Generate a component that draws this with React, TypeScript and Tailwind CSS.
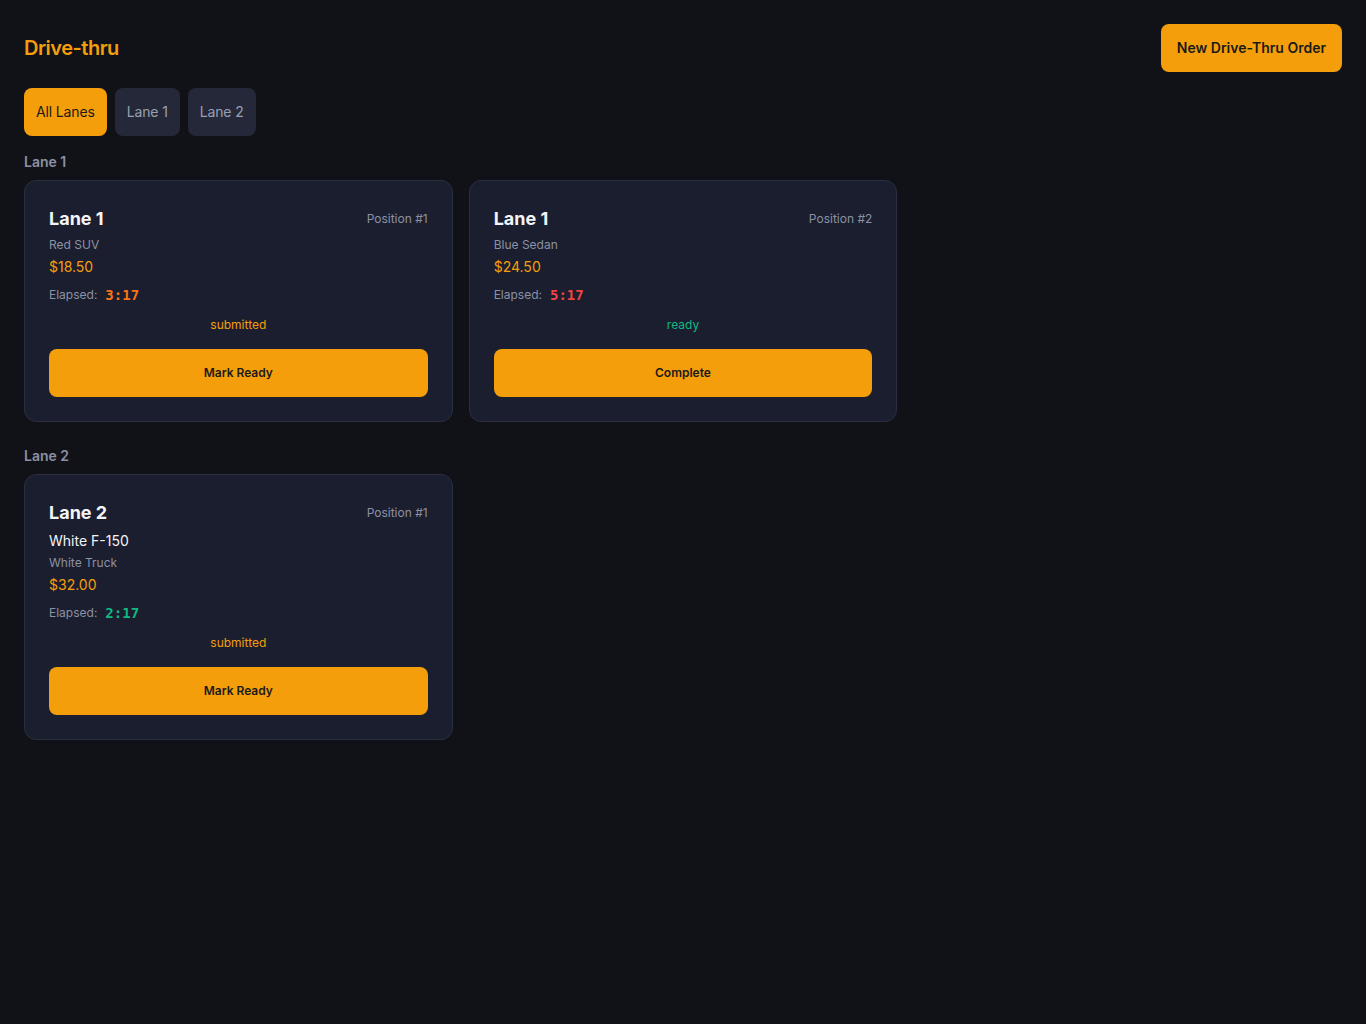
import { useState } from "react";

type Order = {
  id: number;
  lane: number;
  position: number;
  vehicle?: string;
  description: string;
  total: string;
  elapsed: string;
  elapsedColor: string;
  status: "submitted" | "ready";
};

const orders: Order[] = [
  { id: 1, lane: 1, position: 1, description: "Red SUV", total: "$18.50", elapsed: "3:17", elapsedColor: "text-[#f97316]", status: "submitted" },
  { id: 2, lane: 1, position: 2, description: "Blue Sedan", total: "$24.50", elapsed: "5:17", elapsedColor: "text-[#ef4444]", status: "ready" },
  { id: 3, lane: 2, position: 1, vehicle: "White F-150", description: "White Truck", total: "$32.00", elapsed: "2:17", elapsedColor: "text-[#10b981]", status: "submitted" },
];

const OrderCard = ({ order }: { order: Order }) => {
  return (
    <div className="rounded-xl border border-[#2a2e42] bg-[#1b1e2e] p-6">
      <div className="flex items-start justify-between">
        <h3 className="text-lg leading-7 font-bold text-gray-100">Lane {order.lane}</h3>
        <span className="text-xs leading-7 text-[#8b91a5]">Position #{order.position}</span>
      </div>
      {order.vehicle && <div className="mt-1 text-sm leading-5 text-gray-100">{order.vehicle}</div>}
      <div className="mt-1 text-xs leading-4 text-[#8b91a5]">{order.description}</div>
      <div className="mt-1 text-sm leading-5 text-[#f59e0b]">{order.total}</div>
      <div className="mt-2 flex items-center gap-2 leading-5">
        <span className="text-xs text-[#8b91a5]">Elapsed:</span>
        <span className={`font-['DejaVu_Sans_Mono',monospace] text-sm font-bold ${order.elapsedColor}`}>{order.elapsed}</span>
      </div>
      <div className={`mt-3 text-center text-xs leading-4 ${order.status === "ready" ? "text-[#10b981]" : "text-[#f59e0b]"}`}>
        {order.status}
      </div>
      <button className="mt-4 h-12 w-full rounded-lg bg-[#f59e0b] text-xs font-semibold text-[#1a1a1a]">
        {order.status === "ready" ? "Complete" : "Mark Ready"}
      </button>
    </div>
  );
};

const App = () => {
  const [filter, setFilter] = useState<number | null>(null);
  const lanes = [1, 2].filter((l) => filter === null || filter === l);

  return (
    <div className="min-h-screen bg-[#111218] p-6 font-['Inter',sans-serif]">
      <header className="flex items-center justify-between">
        <h1 className="text-xl font-semibold tracking-tight text-[#f59e0b]">Drive-thru</h1>
        <button className="h-12 rounded-lg bg-[#f59e0b] px-4 text-sm font-semibold text-[#1a1a1a]">
          New Drive-Thru Order
        </button>
      </header>

      {/* lane filter tabs */}
      <div className="mt-4 flex gap-2">
        {[
          { id: null, label: "All Lanes" },
          { id: 1, label: "Lane 1" },
          { id: 2, label: "Lane 2" },
        ].map((t) => (
          <button
            key={t.label}
            onClick={() => setFilter(t.id)}
            className={`h-12 rounded-lg px-3 text-sm tracking-[-0.01em] ${filter === t.id ? "bg-[#f59e0b] text-[#1a1a1a]" : "bg-[#252838] text-[#98a0b3]"}`}
          >
            {t.label}
          </button>
        ))}
      </div>

      {lanes.map((lane, i) => (
        <section key={lane} className={i === 0 ? "mt-4" : "mt-6"}>
          <h2 className="mb-2 text-sm leading-5 font-semibold text-[#8b91a5]">Lane {lane}</h2>
          <div className="grid grid-cols-3 gap-4">
            {orders.filter((o) => o.lane === lane).map((o) => (
              <OrderCard key={o.id} order={o} />
            ))}
          </div>
        </section>
      ))}
    </div>
  );
};

export default App;
